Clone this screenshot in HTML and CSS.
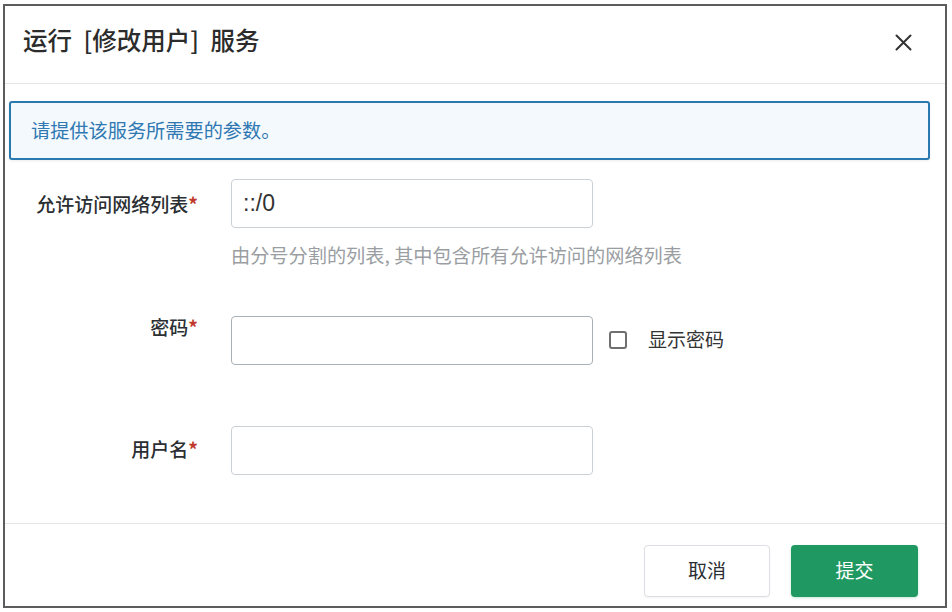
FILE: index.html
```html
<!DOCTYPE html>
<html lang="zh-CN">
<head>
<meta charset="utf-8">
<title>运行 [修改用户] 服务</title>
<link rel="stylesheet" href="styles.css">
</head>
<body>
<div class="dialog">
  <header class="dlg-head">
    <h1 class="dlg-title">运行 [修改用户] 服务</h1>
    <button class="close" type="button" aria-label="关闭">
      <svg width="17" height="17" viewBox="0 0 17 17"><path d="M1.5 1.5 L15.5 15.5 M15.5 1.5 L1.5 15.5" stroke="#333" stroke-width="2" stroke-linecap="round" fill="none"/></svg>
    </button>
  </header>
  <div class="dlg-body">
    <div class="alert">请提供该服务所需要的参数。</div>
    <div class="form">
      <div class="row row-net">
        <label class="lbl lbl-net">允许访问网络列表<span class="req">*</span></label>
        <div class="ctl">
          <input class="inp" type="text" value="::/0">
          <div class="help">由分号分割的列表, 其中包含所有允许访问的网络列表</div>
        </div>
      </div>
      <div class="row row-pwd">
        <label class="lbl lbl-pwd">密码<span class="req">*</span></label>
        <div class="ctl">
          <input class="inp inp-dark" type="password" value="">
        </div>
        <div class="show">
          <span class="check"></span>
          <span class="show-text">显示密码</span>
        </div>
      </div>
      <div class="row row-user">
        <label class="lbl lbl-user">用户名<span class="req">*</span></label>
        <div class="ctl">
          <input class="inp" type="text" value="">
        </div>
      </div>
    </div>
  </div>
  <footer class="dlg-foot">
    <button class="btn btn-cancel" type="button">取消</button>
    <button class="btn btn-submit" type="button">提交</button>
  </footer>
</div>
</body>
</html>
```
FILE: styles.css
```css
html, body {
  margin: 0;
  padding: 0;
  background: #ffffff;
}
body {
  font-family: "Noto Sans CJK SC", "Noto Sans", sans-serif;
  color: #333;
  padding-top: 4px;
  padding-left: 3px;
}
.dialog {
  width: 944px;
  height: 604px;
  box-sizing: border-box;
  border: 2px solid #5b5c5e;
  background: #fff;
  overflow: hidden;
  display: flex;
  flex-direction: column;
}
.dlg-head {
  height: 78px;
  box-sizing: border-box;
  border-bottom: 1px solid #e4e6e8;
  display: flex;
  justify-content: space-between;
  align-items: flex-start;
  padding: 0 33px 0 18px;
  flex-shrink: 0;
}
.dlg-title {
  margin: 17px 0 0 0;
  font-size: 24.5px;
  line-height: 34px;
  font-weight: 500;
  word-spacing: 6px;
  color: #2c2c2c;
}
.close {
  margin-top: 28px;
  padding: 0;
  border: 0;
  background: transparent;
  width: 17px;
  height: 17px;
  display: flex;
}
.dlg-body {
  flex-shrink: 0;
  padding-bottom: 48px;
}
.alert {
  margin: 17px 15px 0 4px;
  height: 59px;
  box-sizing: border-box;
  border: 2px solid #2b79b1;
  border-radius: 3px;
  background: #f3f9fd;
  box-shadow: 0 1px 3px rgba(0, 0, 0, 0.08);
  padding-left: 20px;
  font-size: 19.2px;
  line-height: 55px;
  color: #2f78b2;
}
.form {
  padding-top: 19px;
  display: flex;
  flex-direction: column;
}
.row {
  display: grid;
  grid-template-columns: 193px 362px auto;
  column-gap: 33px;
  align-items: start;
}
.row-net { margin-bottom: 47px; }
.row-pwd { margin-bottom: 61px; }
.lbl {
  text-align: right;
  font-size: 19px;
  line-height: 28px;
  font-weight: 500;
  color: #2b2f33;
}
.lbl-net { padding-top: 11px; }
.lbl-pwd { padding-top: 0; line-height: 22px; }
.lbl-user { padding-top: 9px; }
.req {
  color: #c0392b;
  font-weight: 700;
}
.inp {
  display: block;
  width: 362px;
  height: 49px;
  box-sizing: border-box;
  border: 1px solid #ccd1d6;
  border-radius: 4px;
  padding: 0 11px;
  margin: 0;
  font-family: "Liberation Sans", "Noto Sans CJK SC", sans-serif;
  font-size: 23px;
  color: #333;
  background: #fff;
  outline: none;
}
.inp-dark {
  border-color: #a9b1b8;
}
.help {
  margin-top: 13px;
  font-size: 19.2px;
  line-height: 28px;
  color: #9a9ea2;
  white-space: nowrap;
}
.show {
  margin-left: -17px;
  height: 49px;
  display: flex;
  align-items: center;
}
.check {
  width: 18px;
  height: 18px;
  box-sizing: border-box;
  border: 2px solid #6e6f71;
  border-radius: 3px;
  margin-top: -2px;
}
.show-text {
  margin-left: 21px;
  font-size: 19px;
  line-height: 28px;
  color: #333;
  margin-top: -4px;
}
.dlg-foot {
  border-top: 1px solid #e4e6e8;
  padding: 21px 27px 0 0;
  display: flex;
  justify-content: flex-end;
  gap: 21px;
}
.btn {
  width: 127px;
  height: 52px;
  box-sizing: border-box;
  border-radius: 4px;
  font-family: "Noto Sans CJK SC", "Noto Sans", sans-serif;
  font-size: 19px;
  margin: 0;
  padding: 0 0 3px 0;
}
.btn-cancel {
  width: 126px;
  border: 1px solid #dcdfe3;
  background: #fff;
  color: #2b2f33;
  box-shadow: 0 1px 2px rgba(0, 0, 0, 0.05);
}
.btn-submit {
  border: 0;
  background: #1f9961;
  color: #fff;
  box-shadow: 0 1px 3px rgba(31, 153, 97, 0.25);
}
```
